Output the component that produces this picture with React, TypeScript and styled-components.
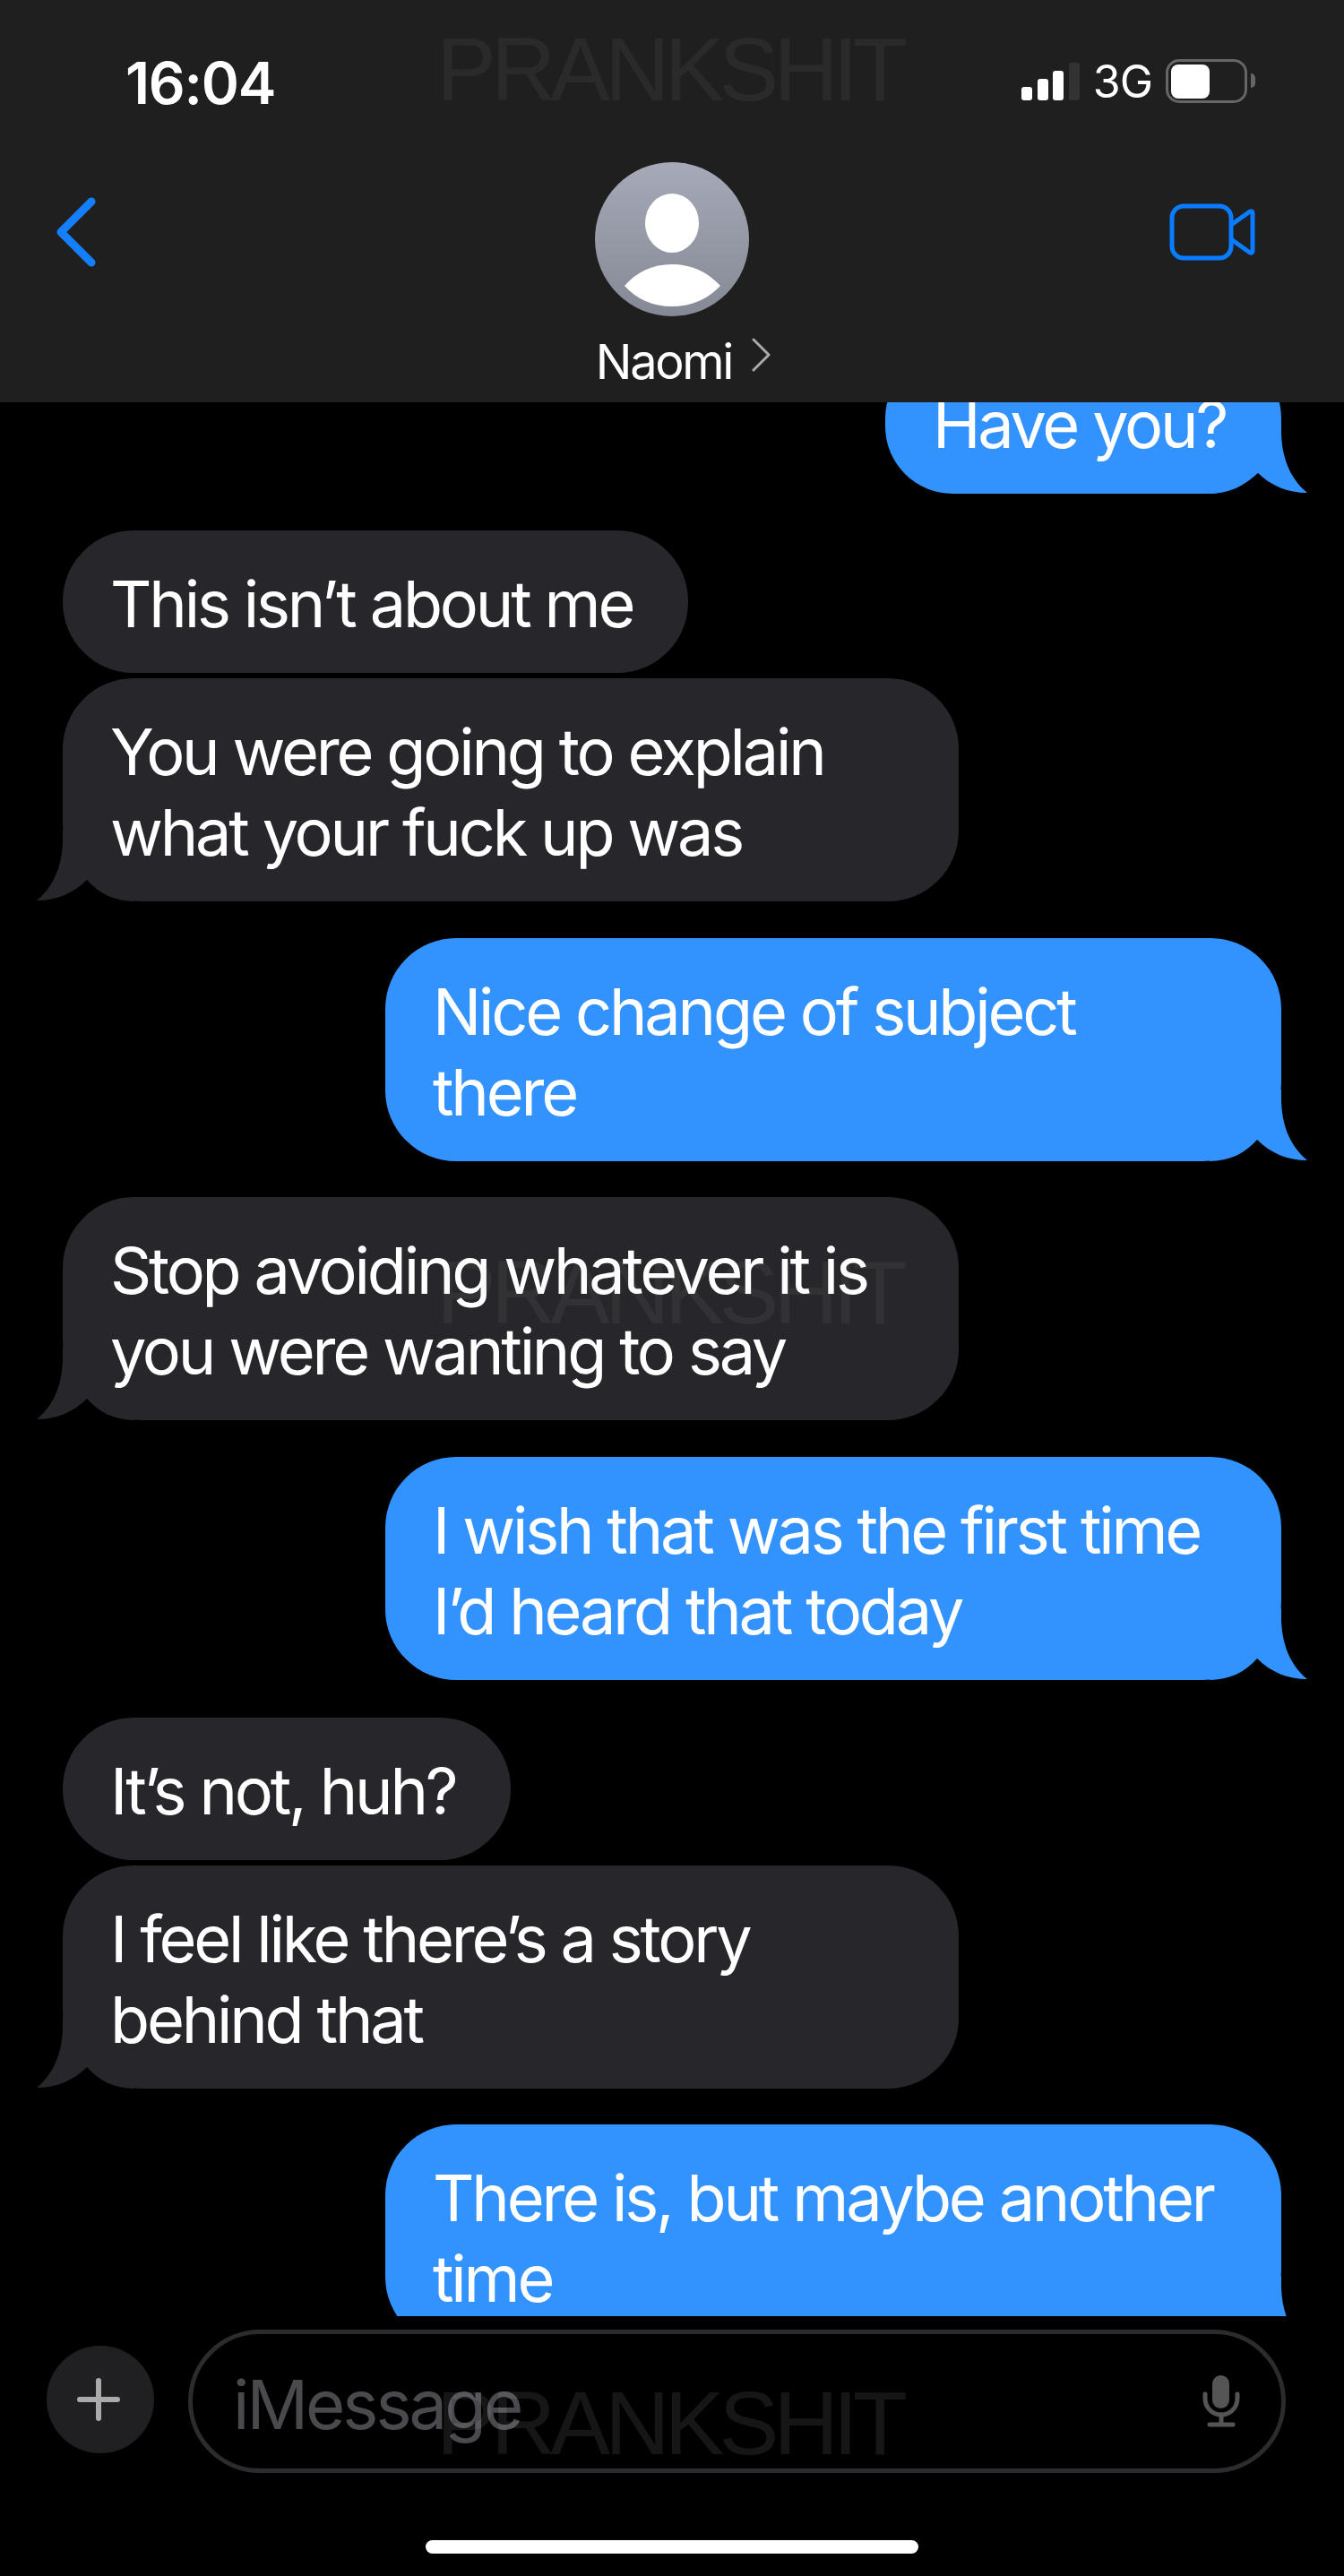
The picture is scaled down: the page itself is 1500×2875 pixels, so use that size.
import styled, { createGlobalStyle } from "styled-components";

const GlobalStyle = createGlobalStyle`
    html, body {
        margin: 0;
        padding: 0;
        background: #000;
    }
`;

const Page = styled.div`
    position: relative;
    width: 1500px;
    height: 2875px;
    overflow: hidden;
    background: #000;
    color: #fff;
    font-family: Inter, "Liberation Sans", sans-serif;
`;

const Watermark = styled.div<{ $top: number; $color: string }>`
    position: absolute;
    z-index: 5;
    left: 487px;
    top: ${(p) => p.$top}px;
    font: 400 100px/1 "Liberation Sans", Arial, sans-serif;
    letter-spacing: -5.8px;
    color: ${(p) => p.$color};
    pointer-events: none;
`;

const Header = styled.header`
    position: relative;
    z-index: 2;
    height: 449px;
    background: #1f1f1f;
`;

const StatusBar = styled.div`
    height: 181px;
    padding: 0 100px 0 140px;
    box-sizing: border-box;
    display: flex;
    align-items: center;
    justify-content: space-between;
`;

const Time = styled.div`
    font-size: 64px;
    font-weight: 600;
    letter-spacing: -1.2px;
    line-height: 1;
    margin-top: 5px;
`;

const StatusRight = styled.div`
    display: flex;
    align-items: center;
    gap: 15px;
`;

const SignalBars = styled.div`
    display: flex;
    align-items: flex-end;
    gap: 5.5px;
    height: 42px;
    margin-top: 1px;
`;

const SignalBar = styled.span<{ $height: number; $off?: boolean }>`
    width: 12px;
    height: ${(p) => p.$height}px;
    border-radius: 3px;
    background: ${(p) => (p.$off ? "#333" : "#fff")};
`;

const Network = styled.div`
    font-size: 50px;
    line-height: 1;
    letter-spacing: -1px;
`;

const Battery = styled.div`
    position: relative;
    width: 91px;
    height: 49px;
    box-sizing: border-box;
    border: 3.5px solid #666;
    border-radius: 15px;
    padding: 2.5px;
    margin-right: 8px;

    &::after {
        content: "";
        position: absolute;
        right: -12px;
        top: 13px;
        width: 5px;
        height: 16px;
        border-radius: 0 8px 8px 0;
        background: #666;
    }
`;

const BatteryFill = styled.div`
    width: 43px;
    height: 100%;
    border-radius: 8px;
    background: #fff;
`;

const NavRow = styled.div`
    display: grid;
    grid-template-columns: 1fr auto 1fr;
`;

const BackIcon = styled.svg`
    display: block;
    margin: 39px 0 0 63px;
`;

const VideoIcon = styled.svg`
    display: block;
    margin: 46px 99px 0 auto;
`;

const Contact = styled.div`
    display: flex;
    flex-direction: column;
    align-items: center;
    margin-right: 1px;
`;

const Avatar = styled.svg`
    display: block;
`;

const NameRow = styled.div`
    display: flex;
    align-items: flex-start;
    gap: 22px;
    margin: 16px 0 0 27px;
`;

const Name = styled.div`
    font-size: 54px;
    line-height: 70px;
    letter-spacing: -2.3px;
`;

const NameChevron = styled.svg`
    display: block;
    margin-top: 8px;
`;

const Thread = styled.main`
    height: 2136px;
    overflow: hidden;
    padding: 0 70px;
    box-sizing: border-box;
`;

const Row = styled.div<{ $mine?: boolean; $gap: number }>`
    display: flex;
    justify-content: ${(p) => (p.$mine ? "flex-end" : "flex-start")};
    margin-top: ${(p) => p.$gap}px;
`;

const Bubble = styled.div<{ $mine?: boolean; $wide?: boolean; $tail?: boolean }>`
    position: relative;
    box-sizing: border-box;
    width: ${(p) => (p.$wide ? "1000px" : "fit-content")};
    padding: 37px 62px 32px 53px;
    border-radius: 79px;
    ${(p) => p.$tail && (p.$mine ? "border-bottom-right-radius: 88px;" : "border-bottom-left-radius: 88px;")}
    background: ${(p) => (p.$mine ? "#3293ff" : "#27272b")};
    font-size: 72px;
    line-height: 90px;
    letter-spacing: -3.2px;
    white-space: nowrap;
`;

const BubbleLine = styled.div`
    position: relative;
    z-index: 1;
`;

const Tail = styled.svg<{ $mine?: boolean }>`
    position: absolute;
    bottom: 0;
    ${(p) => (p.$mine ? "right: -30px;" : "left: -30px; transform: scaleX(-1);")}
`;

const Composer = styled.footer`
    display: flex;
    align-items: center;
    gap: 38px;
    padding: 15px 65px 0 52px;
`;

const PlusButton = styled.div`
    flex: none;
    width: 120px;
    height: 120px;
    margin-top: -4px;
    border-radius: 50%;
    background: #201f21;
    display: flex;
    align-items: center;
    justify-content: center;
`;

const PlusIcon = styled.svg`
    display: block;
    margin-right: 4px;
`;

const InputPill = styled.div`
    flex: 1;
    height: 160px;
    box-sizing: border-box;
    border: 5px solid #2c2c2e;
    border-radius: 80px;
    padding: 0 46px 0 45px;
    display: flex;
    align-items: center;
    justify-content: space-between;
`;

const Placeholder = styled.div`
    font-size: 76px;
    letter-spacing: -3px;
    line-height: 1;
    margin-top: 6px;
    color: #4a4a4e;
`;

const HomeBar = styled.div`
    width: 550px;
    height: 15px;
    margin: 75px auto 0;
    border-radius: 8px;
    background: #fff;
`;

type Message = { lines: string[]; mine?: boolean; wide?: boolean; tail?: boolean; gap: number };

const messages: Message[] = [
    { lines: ["Have you?"], mine: true, tail: true, gap: -57 },
    { lines: ["This isn’t about me"], gap: 41 },
    { lines: ["You were going to explain", "what your fuck up was"], wide: true, tail: true, gap: 6 },
    { lines: ["Nice change of subject", "there"], mine: true, wide: true, tail: true, gap: 41 },
    { lines: ["Stop avoiding whatever it is", "you were wanting to say"], wide: true, tail: true, gap: 40 },
    { lines: ["I wish that was the first time", "I’d heard that today"], mine: true, wide: true, tail: true, gap: 41 },
    { lines: ["It’s not, huh?"], gap: 42 },
    { lines: ["I feel like there’s a story", "behind that"], wide: true, tail: true, gap: 6 },
    { lines: ["There is, but maybe another", "time"], mine: true, wide: true, tail: true, gap: 40 },
];

export default function App() {
    return (
        <Page>
            <GlobalStyle />
            <Watermark $top={27} $color="rgba(255,255,255,0.05)">PRANKSHIT</Watermark>
            <Watermark $top={1392} $color="rgba(200,200,200,0.07)">PRANKSHIT</Watermark>
            <Watermark $top={2654} $color="rgba(255,255,255,0.085)">PRANKSHIT</Watermark>

            <Header>
                <StatusBar>
                    <Time>16:04</Time>
                    <StatusRight>
                        <SignalBars>
                            <SignalBar $height={15} />
                            <SignalBar $height={24} />
                            <SignalBar $height={33} />
                            <SignalBar $height={42} $off />
                        </SignalBars>
                        <Network>3G</Network>
                        <Battery>
                            <BatteryFill />
                        </Battery>
                    </StatusRight>
                </StatusBar>
                <NavRow>
                    <BackIcon width="44" height="78" viewBox="0 0 44 78" fill="none">
                        <path d="M39 5 L5 39 L39 73" stroke="#147efb" strokeWidth="9" strokeLinecap="round" strokeLinejoin="round" />
                    </BackIcon>
                    <Contact>
                        <Avatar width="172" height="172" viewBox="0 0 172 172">
                            <defs>
                                <linearGradient id="avatarFill" x1="0" y1="0" x2="0" y2="1">
                                    <stop offset="0" stopColor="#a6aab8" />
                                    <stop offset="1" stopColor="#858995" />
                                </linearGradient>
                            </defs>
                            <circle cx="86" cy="86" r="86" fill="url(#avatarFill)" />
                            <ellipse cx="86" cy="68" rx="30" ry="33" fill="#fff" />
                            <path d="M33 138 Q54 114 86 114 Q118 114 140 138 Q118 161 86 161 Q54 161 33 138 Z" fill="#fff" />
                        </Avatar>
                        <NameRow>
                            <Name>Naomi</Name>
                            <NameChevron width="22" height="38" viewBox="0 0 22 38" fill="none">
                                <path d="M2 2 L19 19 L2 36" stroke="#aaa" strokeWidth="3" strokeLinecap="round" strokeLinejoin="round" />
                            </NameChevron>
                        </NameRow>
                    </Contact>
                    <VideoIcon width="96" height="64" viewBox="0 0 96 64" fill="none">
                        <rect x="3" y="3" width="66" height="58" rx="13" stroke="#0a7cff" strokeWidth="5" />
                        <path d="M69 24 L90 9 Q93 8 93 11 L93 53 Q93 56 90 55 L69 40" stroke="#0a7cff" strokeWidth="5" strokeLinejoin="round" />
                    </VideoIcon>
                </NavRow>
            </Header>

            <Thread>
                {messages.map((m) => (
                    <Row key={m.lines[0]} $mine={m.mine} $gap={m.gap}>
                        <Bubble $mine={m.mine} $wide={m.wide} $tail={m.tail}>
                            {m.lines.map((line) => (
                                <BubbleLine key={line}>{line}</BubbleLine>
                            ))}
                            {m.tail && (
                                <Tail $mine={m.mine} width="110" height="80" viewBox="0 0 110 80">
                                    <path
                                        d="M80 13 C81 45 93 66 109 79 C87 79 68 71 53 56 C40 71 22 80 0 80 L0 0 L80 0 Z"
                                        fill={m.mine ? "#3293ff" : "#27272b"}
                                    />
                                </Tail>
                            )}
                        </Bubble>
                    </Row>
                ))}
            </Thread>

            <Composer>
                <PlusButton>
                    <PlusIcon width="48" height="48" viewBox="0 0 48 48" fill="none">
                        <path d="M24 3 V45 M3 24 H45" stroke="#aaa" strokeWidth="6" strokeLinecap="round" />
                    </PlusIcon>
                </PlusButton>
                <InputPill>
                    <Placeholder>iMessage</Placeholder>
                    <svg width="42" height="60" viewBox="0 0 42 60" fill="none">
                        <rect x="11" y="1" width="19" height="37" rx="9.5" fill="#555" />
                        <path d="M3 22 V27 A18 18 0 0 0 39 27 V22" stroke="#555" strokeWidth="5" strokeLinecap="round" />
                        <path d="M21 45 V55 M8 56 H34" stroke="#555" strokeWidth="5" strokeLinecap="round" />
                    </svg>
                </InputPill>
            </Composer>
            <HomeBar />
        </Page>
    );
}
